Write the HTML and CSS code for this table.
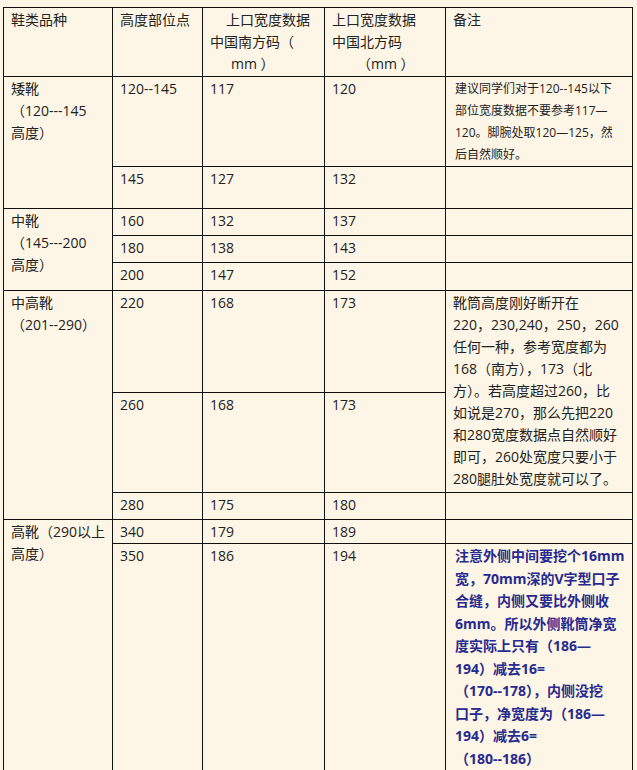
FILE: index.html
```html
<!DOCTYPE html>
<html lang="zh">
<head>
<meta charset="utf-8">
<link rel="stylesheet" href="styles.css">
</head>
<body>
<div class="page">
<table class="size-table">
  <colgroup>
    <col class="c1"><col class="c2"><col class="c3"><col class="c4"><col class="c5">
  </colgroup>
  <tr class="h-head">
    <td>鞋类品种</td>
    <td>高度部位点</td>
    <td><span class="ind16">上口宽度数据</span><br>中国南方码（<br><span class="ind21">mm ）</span></td>
    <td>上口宽度数据<br>中国北方码<br><span class="ind25">（mm ）</span></td>
    <td>备注</td>
  </tr>
  <tr class="h-r1">
    <td rowspan="2">矮靴<br>（120---145<br>高度）</td>
    <td>120--145</td>
    <td>117</td>
    <td>120</td>
    <td class="note-sm">建议同学们对于120--145以下<br>部位宽度数据不要参考117—<br>120。脚腕处取120—125，然<br>后自然顺好。</td>
  </tr>
  <tr class="h-r2">
    <td>145</td>
    <td>127</td>
    <td>132</td>
    <td></td>
  </tr>
  <tr class="h-r3">
    <td rowspan="3">中靴<br>（145---200<br>高度）</td>
    <td>160</td>
    <td>132</td>
    <td>137</td>
    <td></td>
  </tr>
  <tr class="h-r4">
    <td>180</td>
    <td>138</td>
    <td>143</td>
    <td></td>
  </tr>
  <tr class="h-r5">
    <td>200</td>
    <td>147</td>
    <td>152</td>
    <td></td>
  </tr>
  <tr class="h-r6">
    <td rowspan="3">中高靴<br>（201--290）</td>
    <td>220</td>
    <td>168</td>
    <td>173</td>
    <td rowspan="2">靴筒高度刚好断开在<br>220，230,240，250，260<br>任何一种，参考宽度都为<br>168（南方），173（北<br>方）。若高度超过260，比<br>如说是270，那么先把220<br>和280宽度数据点自然顺好<br>即可，260处宽度只要小于<br>280腿肚处宽度就可以了。</td>
  </tr>
  <tr class="h-r7">
    <td>260</td>
    <td>168</td>
    <td>173</td>
  </tr>
  <tr class="h-r8">
    <td>280</td>
    <td>175</td>
    <td>180</td>
    <td></td>
  </tr>
  <tr class="h-r9">
    <td rowspan="2">高靴（290以上<br>高度）</td>
    <td>340</td>
    <td>179</td>
    <td>189</td>
    <td></td>
  </tr>
  <tr class="h-r10">
    <td>350</td>
    <td>186</td>
    <td>194</td>
    <td class="note-blue">注意外侧中间要挖个16mm<br>宽，70mm深的V字型口子<br>合缝，内侧又要比外侧收<br>6mm。所以外侧靴筒净宽<br>度实际上只有（186—<br>194）减去16=<br>（170--178），内侧没挖<br>口子，净宽度为（186—<br>194）减去6=<br>（180--186）</td>
  </tr>
</table>
</div>
</body>
</html>
```
FILE: styles.css
```css
html, body {
  margin: 0;
  padding: 0;
  background: #fdf6e6;
}
.page {
  width: 637px;
  height: 770px;
  overflow: hidden;
  padding: 7px 0 0 3px;
  box-sizing: border-box;
}
.size-table {
  border-collapse: collapse;
  table-layout: fixed;
  width: 630px;
  font-family: "Open Sans", "Noto Sans CJK SC", sans-serif;
  font-size: 14px;
  line-height: 22px;
  color: #222;
}
.c1 { width: 109px; }
.c2 { width: 90px; }
.c3 { width: 122px; }
.c4 { width: 121px; }
.c5 { width: 187px; }
.size-table td {
  border: 1px solid #111;
  vertical-align: top;
  padding: 1px 6px 0 7px;
  white-space: nowrap;
  overflow: hidden;
}
.ind16 { padding-left: 16px; }
.ind21 { padding-left: 21px; }
.ind25 { padding-left: 25px; }
.h-head { height: 69px; }
.h-r1 { height: 90px; }
.h-r2 { height: 42px; }
.h-r3 { height: 27px; }
.h-r4 { height: 27px; }
.h-r5 { height: 28px; }
.h-r6 { height: 102px; }
.h-r7 { height: 100px; }
.h-r8 { height: 27px; }
.h-r9 { height: 24px; }
.h-r10 { height: 260px; }
.size-table td.note-sm {
  font-size: 12px;
  line-height: 22px;
  padding-left: 9px;
}
.size-table td.note-blue {
  color: #272a8e;
  font-weight: bold;
  padding-left: 9px;
  line-height: 22.5px;
}
```
